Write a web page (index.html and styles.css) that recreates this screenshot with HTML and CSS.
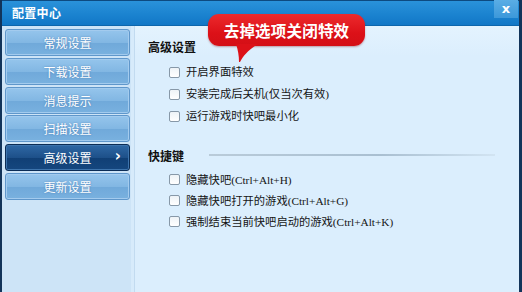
FILE: index.html
```html
<!DOCTYPE html>
<html lang="zh-CN">
<head>
<meta charset="utf-8">
<title>配置中心</title>
<link rel="stylesheet" href="styles.css">
</head>
<body>
<div class="window">
  <div class="titlebar">
    <span class="title">配置中心</span>
    <div class="close">x</div>
  </div>
  <div class="body">
    <nav class="sidebar">
      <div class="nav-btn">常规设置</div>
      <div class="nav-btn">下载设置</div>
      <div class="nav-btn">消息提示</div>
      <div class="nav-btn">扫描设置</div>
      <div class="nav-btn active">高级设置<span class="chev">&#8250;</span></div>
      <div class="nav-btn">更新设置</div>
    </nav>
    <main class="main">
      <section class="group">
        <h3 class="group-title">高级设置</h3>
        <ul class="opts">
          <li class="opt"><span class="cb"></span><span class="lbl">开启界面特效</span></li>
          <li class="opt"><span class="cb"></span><span class="lbl">安装完成后关机(仅当次有效)</span></li>
          <li class="opt"><span class="cb"></span><span class="lbl">运行游戏时快吧最小化</span></li>
        </ul>
      </section>
      <section class="group group-2">
        <h3 class="group-title">快捷键<span class="rule"></span></h3>
        <ul class="opts opts-tight">
          <li class="opt"><span class="cb"></span><span class="lbl">隐藏快吧(Ctrl+Alt+H)</span></li>
          <li class="opt"><span class="cb"></span><span class="lbl">隐藏快吧打开的游戏(Ctrl+Alt+G)</span></li>
          <li class="opt"><span class="cb"></span><span class="lbl">强制结束当前快吧启动的游戏(Ctrl+Alt+K)</span></li>
        </ul>
      </section>
    </main>
  </div>
  <div class="callout">
    <svg class="tail" width="30" height="22" viewBox="0 0 30 22">
      <path d="M1 0 C3 6 4 12 4 18 L5 18 C8 12 14 5 23 0 Z" fill="#dc1118"/>
    </svg>
    <span class="callout-text">去掉选项关闭特效</span>
  </div>
</div>
</body>
</html>
```

FILE: styles.css
```css
* { box-sizing: border-box; margin: 0; padding: 0; }
html, body { width: 522px; height: 292px; overflow: hidden; background: #dbeefd; }
body {
  font-family: "Liberation Serif", "Noto Sans CJK SC", serif;
  font-size: 12px;
  color: #111;
}
.window {
  position: relative;
  width: 522px;
  height: 292px;
  display: flex;
  flex-direction: column;
  border-left: 2px solid #12345a;
  border-right: 3px solid #12345a;
  background: #dbeefd;
}
.titlebar {
  height: 26px;
  flex: none;
  display: flex;
  align-items: flex-start;
  background: linear-gradient(#2a92da, #1a82cf 60%, #1277c6);
  border-top: 1px solid #0d4a80;
  border-bottom: 1px solid #0d66ac;
}
.title {
  font-family: "Noto Sans CJK SC", sans-serif;
  font-weight: bold;
  color: #fff;
  font-size: 12px;
  line-height: 24px;
  padding-left: 10px;
  letter-spacing: 0.3px;
}
.close {
  margin-left: auto;
  margin-right: 1px;
  width: 24px;
  height: 18px;
  background: linear-gradient(#5aade5, #3c98da);
  color: #fff;
  font-family: "DejaVu Sans", sans-serif;
  font-weight: bold;
  font-size: 13px;
  line-height: 17px;
  text-align: center;
  margin-top: -1px;
}
.body {
  flex: 1;
  display: flex;
  min-height: 0;
}
.sidebar {
  width: 133px;
  flex: none;
  background: #cde4f7;
  border-right: 1px solid #c2dbf0;
  box-shadow: inset -3px 0 0 #d7ebfb;
  padding: 3px 0 0 3px;
  display: flex;
  flex-direction: column;
  gap: 1.8px;
}
.nav-btn {
  position: relative;
  width: 125px;
  height: 27px;
  border: 1px solid #5f97cb;
  border-radius: 3px;
  box-shadow: inset 0 0 0 1px #a3cbee;
  background: linear-gradient(#95c5ec, #82b7e3 50%, #70a9da 52%, #79b1df);
  color: #fff;
  font-family: "Noto Sans CJK SC", sans-serif;
  font-size: 12px;
  line-height: 25px;
  text-align: center;
  text-shadow: 0 0 2px rgba(40, 90, 150, 0.6);
}
.nav-btn.active {
  border-color: #0c2d55;
  box-shadow: inset 0 0 0 1px #3d74ad;
  background: linear-gradient(#2f68a5, #1d5089 50%, #103f75 52%, #15477f);
  text-shadow: none;
}
.chev {
  position: absolute;
  right: 8px;
  top: 0;
  font-family: "DejaVu Sans", sans-serif;
  font-weight: bold;
  font-size: 15px;
  line-height: 23px;
}
.main {
  flex: 1;
  padding: 14px 24px 0 13px;
  background: linear-gradient(#e4f3fe, #dbeefd 30px);
}
.group-title {
  font-family: "Noto Sans CJK SC", sans-serif;
  font-size: 12px;
  font-weight: bold;
  line-height: 14px;
  color: #111;
  display: flex;
  align-items: center;
}
.rule {
  flex: 1;
  height: 2px;
  margin-left: 25px;
  background: linear-gradient(90deg, #b9cbd9, #a9bfd1 60%, #d2e4f2);
  margin-top: -2px;
}
.opts { list-style: none; margin-top: 7px; padding-left: 21px; }
.opt {
  height: 22px;
  display: flex;
  align-items: center;
}
.opts-tight { margin-top: 6px; }
.opts-tight .opt { height: 21px; }
.group-2 { margin-top: 22px; }
.cb {
  width: 11px;
  height: 11px;
  border: 1px solid #8798a8;
  border-radius: 2px;
  background: linear-gradient(#eef3f7, #ffffff);
  flex: none;
  margin-right: 6px;
}
.lbl {
  font-size: 11.3px;
  line-height: 14px;
  color: #151515;
  font-family: "Liberation Serif", "Noto Sans CJK SC", serif;
}
.callout {
  position: absolute;
  left: 206px;
  top: 14px;
  width: 157px;
  height: 32px;
  border-radius: 11px;
  background: linear-gradient(#ec2a2d, #dc1118 60%, #d40f16);
  box-shadow: 0 1px 2px rgba(120, 0, 0, 0.35);
  display: flex;
  align-items: center;
  justify-content: center;
}
.callout-text {
  position: relative;
  font-family: "Noto Sans CJK SC", sans-serif;
  font-weight: bold;
  font-size: 15.5px;
  color: #fff;
  letter-spacing: 0.2px;
}
.tail {
  position: absolute;
  left: 27px;
  top: 30px;
}
```
